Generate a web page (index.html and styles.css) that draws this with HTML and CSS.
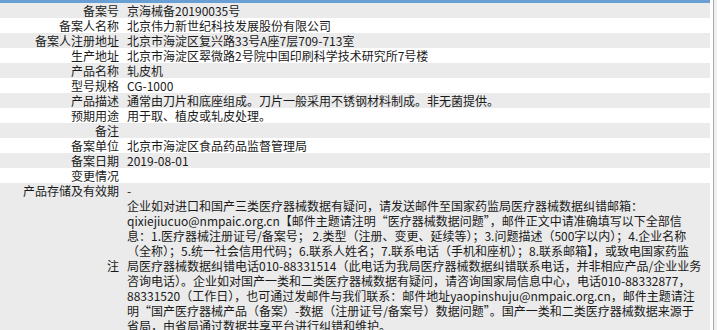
FILE: index.html
```html
<!DOCTYPE html>
<html lang="zh-CN">
<head>
<meta charset="utf-8">
<title>备案信息</title>
<link rel="stylesheet" href="styles.css">
</head>
<body>
<div class="frame">
  <div class="main">
    <div class="topbar"></div>
    <div class="info">
      <div class="row gray"><div class="lab">备案号</div><div class="val">京海械备20190035号</div></div>
      <div class="row"><div class="lab">备案人名称</div><div class="val">北京伟力新世纪科技发展股份有限公司</div></div>
      <div class="row gray"><div class="lab">备案人注册地址</div><div class="val">北京市海淀区复兴路33号A座7层709-713室</div></div>
      <div class="row"><div class="lab">生产地址</div><div class="val">北京市海淀区翠微路2号院中国印刷科学技术研究所7号楼</div></div>
      <div class="row gray"><div class="lab">产品名称</div><div class="val">轧皮机</div></div>
      <div class="row"><div class="lab">型号规格</div><div class="val">CG-1000</div></div>
      <div class="row gray"><div class="lab">产品描述</div><div class="val">通常由刀片和底座组成。刀片一般采用不锈钢材料制成。非无菌提供。</div></div>
      <div class="row"><div class="lab">预期用途</div><div class="val">用于取、植皮或轧皮处理。</div></div>
      <div class="row gray"><div class="lab">备注</div><div class="val"></div></div>
      <div class="row"><div class="lab">备案单位</div><div class="val">北京市海淀区食品药品监督管理局</div></div>
      <div class="row gray"><div class="lab">备案日期</div><div class="val">2019-08-01</div></div>
      <div class="row"><div class="lab">变更情况</div><div class="val"></div></div>
      <div class="row gray"><div class="lab">产品存储及有效期</div><div class="val">-</div></div>
      <div class="row gray note"><div class="lab">注</div><div class="val">
        <span class="ln">企业如对进口和国产三类医疗器械数据有疑问，请发送邮件至国家药监局医疗器械数据纠错邮箱：</span>
        <span class="ln">qixiejiucuo@nmpaic.org.cn【邮件主题请注明“医疗器械数据问题”，邮件正文中请准确填写以下全部信</span>
        <span class="ln">息：1.医疗器械注册证号/备案号； 2.类型（注册、变更、延续等）；3.问题描述（500字以内）；4.企业名称</span>
        <span class="ln">（全称）；5.统一社会信用代码；6.联系人姓名；7.联系电话（手机和座机）；8.联系邮箱】，或致电国家药监</span>
        <span class="ln">局医疗器械数据纠错电话010-88331514（此电话为我局医疗器械数据纠错联系电话，并非相应产品/企业业务</span>
        <span class="ln">咨询电话）。企业如对国产一类和二类医疗器械数据有疑问，请咨询国家局信息中心，电话010-88332877，</span>
        <span class="ln">88331520（工作日），也可通过发邮件与我们联系：邮件地址yaopinshuju@nmpaic.org.cn，邮件主题请注</span>
        <span class="ln">明“国产医疗器械产品（备案）-数据（注册证号/备案号）数据问题”。国产一类和二类医疗器械数据来源于</span>
        <span class="ln">省局，由省局通过数据共享平台进行纠错和维护。</span>
      </div></div>
    </div>
  </div>
  <div class="edge"></div>
</div>
</body>
</html>
```

FILE: styles.css
```css
html, body {
  margin: 0;
  padding: 0;
  background: #ffffff;
}
body {
  font-family: "Noto Sans CJK SC", "Microsoft YaHei", sans-serif;
  font-size: 12px;
  color: #1a1a1a;
  overflow: hidden;
}
.frame {
  display: flex;
  height: 330px;
}
.main {
  width: 710px;
  flex: none;
}
.edge {
  margin-left: 3px;
  border-left: 1px solid #a8a8a8;
  background: #f0f0f0;
  flex: 1;
}
.topbar {
  height: 3px;
  background: #699fd2;
}
.row {
  display: grid;
  grid-template-columns: 123px 1fr;
  min-height: 15px;
  line-height: 15px;
  background: #ffffff;
}
.row.gray {
  background: #ebebeb;
}
.lab {
  text-align: right;
  padding-right: 4px;
  white-space: nowrap;
}
.val {
  padding-left: 4px;
  white-space: nowrap;
}
.note .lab {
  align-self: center;
}
.note .val {
  padding-top: 0;
}
.ln {
  display: block;
  white-space: nowrap;
}
```
